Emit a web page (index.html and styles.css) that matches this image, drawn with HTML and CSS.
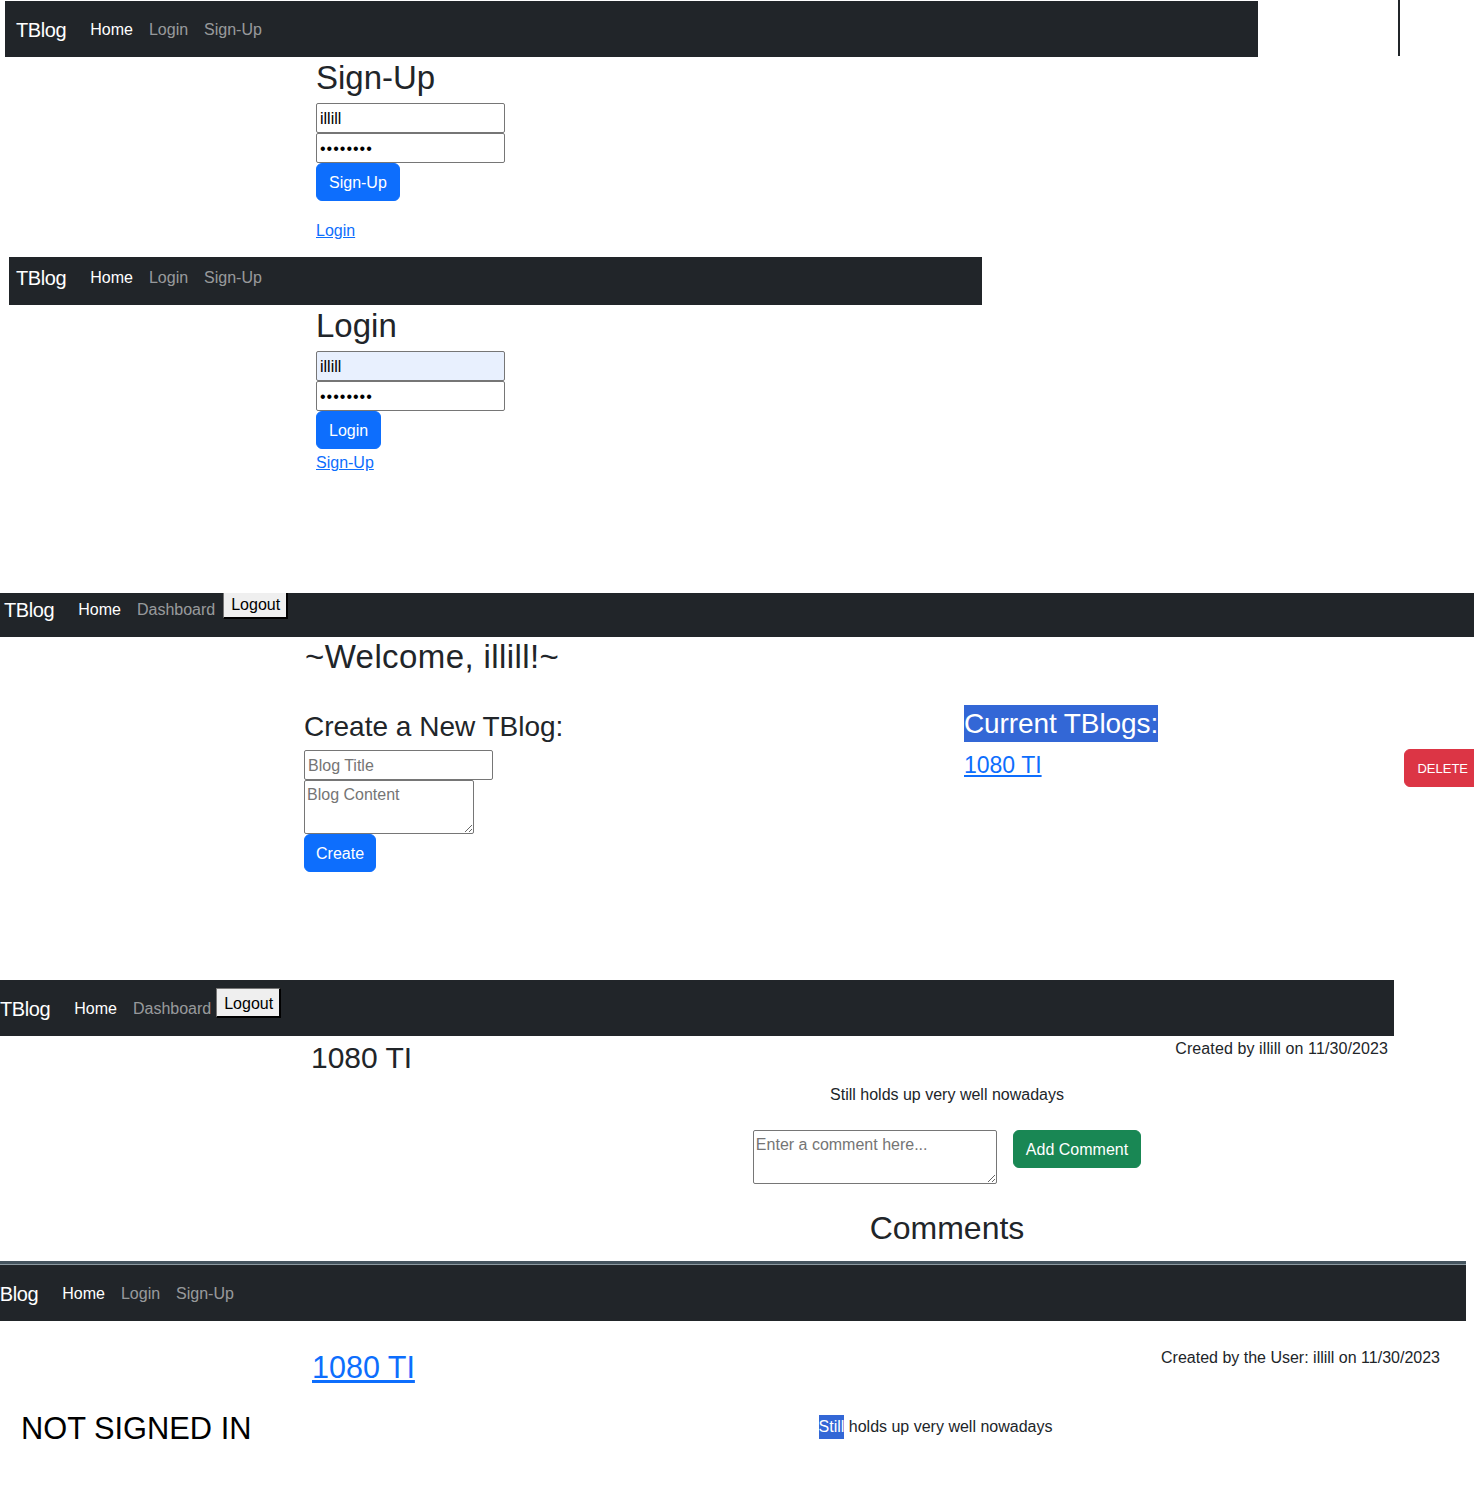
FILE: index.html
```html
<!DOCTYPE html>
<html lang="en">
<head>
<meta charset="utf-8">
<title>TBlog</title>
<link rel="stylesheet" href="styles.css">
</head>
<body>

<section class="shot shot-signup">
  <div class="topline">
    <nav class="navbar nav-s1">
      <div class="nav-inner">
        <span class="brand">TBlog</span>
        <a class="nav-link active" href="#">Home</a>
        <a class="nav-link" href="#">Login</a>
        <a class="nav-link" href="#">Sign-Up</a>
      </div>
    </nav>
    <div class="vline"></div>
  </div>
  <div class="auth-form">
    <h2 class="title">Sign-Up</h2>
    <input class="field" type="text" value="illill">
    <input class="field" type="password" value="illill12">
    <button class="btn btn-primary">Sign-Up</button>
    <a class="link link-gap" href="#">Login</a>
  </div>
</section>

<section class="shot shot-login">
  <nav class="navbar nav-s2">
    <div class="nav-inner">
      <span class="brand">TBlog</span>
      <a class="nav-link active" href="#">Home</a>
      <a class="nav-link" href="#">Login</a>
      <a class="nav-link" href="#">Sign-Up</a>
    </div>
  </nav>
  <div class="auth-form">
    <h2 class="title">Login</h2>
    <input class="field field-autofill" type="text" value="illill">
    <input class="field" type="password" value="illill12">
    <button class="btn btn-primary">Login</button>
    <a class="link" href="#">Sign-Up</a>
  </div>
</section>

<section class="shot shot-dash">
  <nav class="navbar nav-s3">
    <div class="nav-inner">
      <span class="brand">TBlog</span>
      <a class="nav-link active" href="#">Home</a>
      <a class="nav-link" href="#">Dashboard</a>
      <button class="logout">Logout</button>
    </div>
  </nav>
  <h2 class="title welcome">~Welcome, illill!~</h2>
  <div class="dash-row">
    <div class="dash-create">
      <h3 class="subtitle">Create a New TBlog:</h3>
      <input class="field" type="text" placeholder="Blog Title">
      <textarea class="area area-blog" placeholder="Blog Content"></textarea>
      <button class="btn btn-primary btn-create">Create</button>
    </div>
    <div class="dash-list">
      <h3 class="current"><span class="selected">Current TBlogs:</span></h3>
      <div class="blog-item">
        <a class="link blog-link" href="#">1080 TI</a>
        <button class="btn btn-danger">DELETE</button>
      </div>
    </div>
  </div>
</section>

<section class="shot shot-post">
  <nav class="navbar nav-s4">
    <div class="nav-inner">
      <span class="brand">TBlog</span>
      <a class="nav-link active" href="#">Home</a>
      <a class="nav-link" href="#">Dashboard</a>
      <button class="logout">Logout</button>
    </div>
  </nav>
  <div class="post-head">
    <h2 class="post-title">1080 TI</h2>
    <p class="meta meta-s4">Created by illill on 11/30/2023</p>
  </div>
  <div class="post-body">
    <p class="content">Still holds up very well nowadays</p>
    <div class="comment-form">
      <textarea class="area area-comment" placeholder="Enter a comment here..."></textarea>
      <button class="btn btn-success">Add Comment</button>
    </div>
    <h2 class="title comments">Comments</h2>
  </div>
</section>

<section class="shot shot-public">
  <div class="stripe"></div>
  <nav class="navbar nav-s5">
    <div class="nav-inner">
      <span class="brand">TBlog</span>
      <a class="nav-link active" href="#">Home</a>
      <a class="nav-link" href="#">Login</a>
      <a class="nav-link" href="#">Sign-Up</a>
    </div>
  </nav>
  <div class="public-head">
    <a class="link public-title" href="#">1080 TI</a>
    <p class="meta meta-s5">Created by the User: illill on 11/30/2023</p>
  </div>
  <div class="public-row">
    <p class="not-signed">NOT SIGNED IN</p>
    <p class="content public-content"><span class="sel-word">Still</span> holds up very well nowadays</p>
  </div>
</section>

</body>
</html>
```

FILE: styles.css
```css
* { box-sizing: border-box; }

html, body {
  margin: 0;
  padding: 0;
  background: #fff;
}

body {
  width: 1480px;
  font-family: "Liberation Sans", Arial, sans-serif;
  font-size: 16px;
  line-height: 24px;
  color: #212529;
}

p, h2, h3 { margin: 0; font-weight: 400; }

.shot { overflow: hidden; }

/* ---------- navbars ---------- */
.navbar {
  background: #212529;
  height: 56px;
  overflow: hidden;
}
.nav-inner {
  display: flex;
  align-items: flex-start;
  padding-top: 8px;
}
.brand {
  font-size: 20px;
  line-height: 30px;
  padding: 6px 0 4px;
  margin-right: 16px;
  color: #fff;
  white-space: nowrap;
  letter-spacing: -0.4px;
}
.nav-link {
  font-size: 16px;
  line-height: 24px;
  padding: 9px 8px 7px;
  color: rgba(255, 255, 255, 0.55);
  text-decoration: none;
  white-space: nowrap;
}
.nav-link.active { color: #fff; }

.logout {
  font-family: inherit;
  font-size: 16px;
  line-height: 18px;
  height: 30px;
  padding: 2px 6px 0 7px;
  background: #efefef;
  color: #000;
  border: 1px solid #767676;
  border-right: 2px solid #000;
  border-bottom: 2px solid #000;
  border-radius: 0;
}

/* ---------- shared controls ---------- */
.title {
  font-size: 33px;
  line-height: 38px;
}
.field {
  display: block;
  width: 189px;
  height: 30px;
  margin: 0;
  padding: 1px 3px 0;
  border: 1px solid #767676;
  border-radius: 2px;
  font-family: inherit;
  font-size: 16px;
  color: #000;
  background: #fff;
}
.field[type="password"] { letter-spacing: 1px; }
.field-autofill { background: #e8f0fe; }
.field::placeholder, .area::placeholder { color: #757575; }

.area {
  display: block;
  margin: 0;
  padding: 4px 2px 2px;
  border: 1px solid #767676;
  border-radius: 2px;
  font-family: inherit;
  font-size: 16px;
  line-height: 20px;
  color: #000;
}

.btn {
  display: inline-block;
  font-family: inherit;
  font-size: 16px;
  line-height: 24px;
  padding: 7px 12px 5px;
  border: 1px solid transparent;
  border-radius: 6px;
  color: #fff;
  cursor: pointer;
  white-space: nowrap;
}
.btn-primary { background: #0d6efd; border-color: #0d6efd; }
.btn-success { background: #198754; border-color: #198754; }
.btn-danger  { background: #dc3545; border-color: #dc3545; }
.btn-create { padding-left: 11px; padding-right: 11px; }

.link {
  color: #0d6efd;
  text-decoration: underline;
}

/* ---------- shot 1 : sign-up ---------- */
.shot-signup { height: 257px; }
.topline {
  display: flex;
  align-items: flex-start;
}
.nav-s1 {
  width: 1253px;
  margin: 1px 0 0 5px;
}
.nav-s1 .nav-inner { padding-left: 11px; }
.vline {
  width: 2px;
  height: 56px;
  margin-left: 140px;
  background: #212529;
}
.auth-form {
  display: flex;
  flex-direction: column;
  align-items: flex-start;
  margin-left: 316px;
}
.auth-form .title { margin: 2px 0 6px; }
.link-gap { margin-top: 16px; }
.auth-form .link { line-height: 25px; padding-top: 1px; }

/* ---------- shot 2 : login ---------- */
.shot-login { height: 336px; }
.nav-s2 {
  width: 973px;
  height: 48px;
  margin-left: 9px;
}
.nav-s2 .nav-inner { padding: 0 0 0 7px; }

/* ---------- shot 3 : dashboard ---------- */
.shot-dash {
  height: 387px;
  width: 1474px;
}
.nav-s3 { height: 44px; }
.nav-s3 .nav-inner {
  padding: 0 0 0 4px;
  margin-top: -4px;
}
.welcome {
  margin-left: 305px;
  letter-spacing: 0.4px;
  padding-top: 1px;
}
.dash-row {
  display: grid;
  grid-template-columns: 660px 517px;
  margin: 29px 0 0 304px;
}
.dash-create {
  display: flex;
  flex-direction: column;
  align-items: flex-start;
}
.subtitle {
  font-size: 28px;
  line-height: 31px;
  margin: 6px 0 8px;
}
.area-blog {
  width: 170px;
  height: 54px;
}
.current {
  font-size: 28px;
  line-height: 37px;
}
.selected {
  display: inline-block;
  background: #3367d6;
  color: #fff;
  padding-top: 1px;
  line-height: 36px;
  letter-spacing: -0.1px;
}
.blog-item {
  display: flex;
  align-items: flex-start;
  justify-content: space-between;
  margin-top: 7px;
}
.blog-link {
  font-size: 23px;
  line-height: 28px;
  margin-top: 2px;
}
.btn-danger {
  font-size: 13px;
  line-height: 36px;
  padding: 1px 12px 0 12px;
  height: 38px;
}

/* ---------- shot 4 : post (signed in) ---------- */
.shot-post {
  height: 281px;
  width: 1394px;
}
.nav-s4 .nav-inner { padding-left: 0; }
.nav-s4 .logout { margin-left: -3px; }
.post-head {
  display: flex;
  align-items: flex-start;
  justify-content: space-between;
  padding: 0 6px 0 311px;
}
.post-title {
  font-size: 30px;
  line-height: 36px;
  margin-top: 4px;
}
.meta { font-size: 16px; line-height: 24px; }
.meta-s4 { padding-top: 1px; letter-spacing: 0.1px; }
.post-body {
  margin-left: 500px;
  display: flex;
  flex-direction: column;
  align-items: center;
}
.content { margin-top: 7px; }
.comment-form {
  display: flex;
  align-items: flex-start;
  gap: 16px;
  margin-top: 23px;
}
.area-comment {
  width: 244px;
  height: 54px;
}
.comments { margin-top: 25px; font-size: 32px; }

/* ---------- shot 5 : post (public) ---------- */
.shot-public {
  height: 251px;
  width: 1466px;
}
.stripe {
  height: 4px;
  background: #45545e;
  border-bottom: 1px solid #8d9aa1;
}
.nav-s5 .nav-inner { padding-left: 0; }
.nav-s5 .brand { margin-left: -12px; }
.public-head {
  display: flex;
  align-items: flex-start;
  justify-content: space-between;
  padding: 0 26px 0 312px;
}
.public-title {
  font-size: 30.5px;
  line-height: 36px;
  margin-top: 28px;
}
.meta-s5 { margin-top: 25px; }
.public-row {
  display: grid;
  grid-template-columns: 405px 1fr;
  align-items: start;
}
.not-signed {
  font-size: 30.8px;
  line-height: 36px;
  color: #000;
  padding-left: 21px;
  margin-top: 26px;
}
.public-content {
  text-align: center;
  margin-top: 30px;
}
.sel-word {
  display: inline-block;
  background: #3367d6;
  color: #fff;
}
```
